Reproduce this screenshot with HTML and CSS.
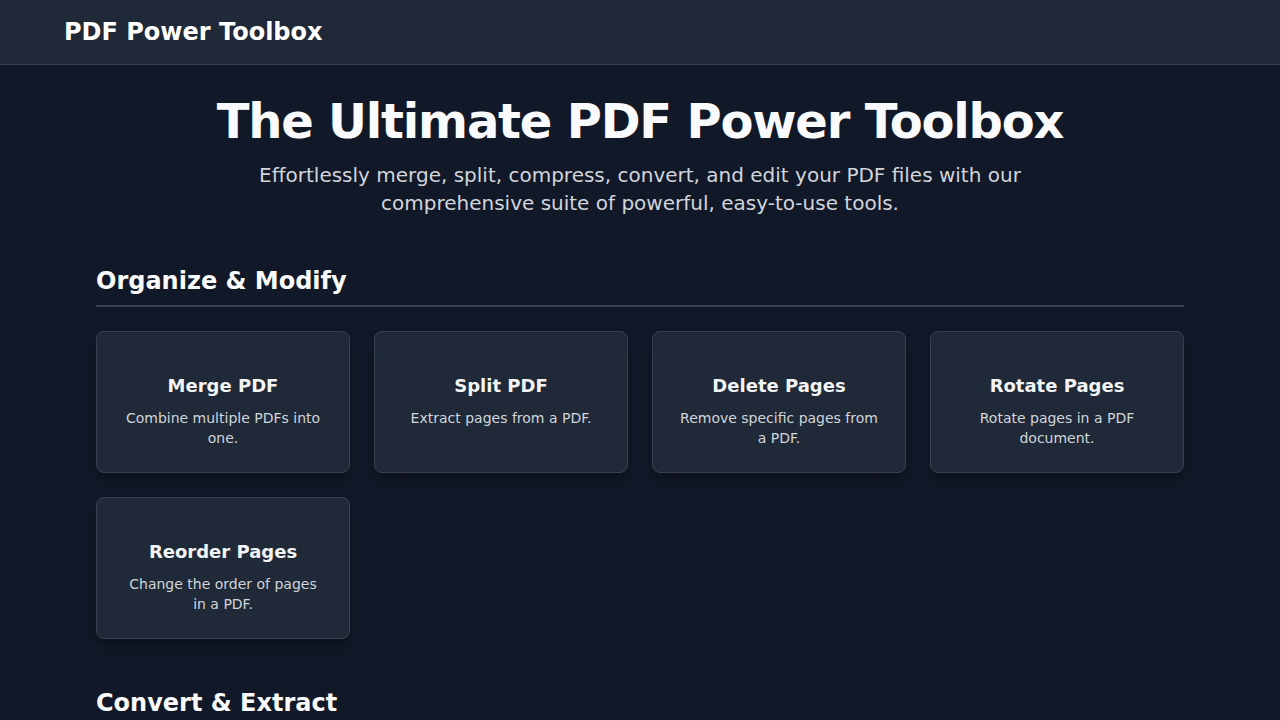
FILE: index.html
```html
<!DOCTYPE html>
<html lang="en">
<head>
<meta charset="utf-8">
<title>PDF Power Toolbox</title>
<link rel="stylesheet" href="styles.css">
</head>
<body>
<header class="site-header">
  <div class="header-inner">
    <span class="logo">PDF Power Toolbox</span>
  </div>
</header>
<main class="main">
  <section class="hero">
    <h1 class="hero-title">The Ultimate PDF Power Toolbox</h1>
    <p class="hero-sub">Effortlessly merge, split, compress, convert, and edit your PDF files with our comprehensive suite of powerful, easy-to-use tools.</p>
  </section>
  <section class="tool-section">
    <h2 class="section-title">Organize &amp; Modify</h2>
    <div class="tool-grid">
      <div class="card"><h3 class="card-title">Merge PDF</h3><p class="card-desc">Combine multiple PDFs into one.</p></div>
      <div class="card"><h3 class="card-title">Split PDF</h3><p class="card-desc">Extract pages from a PDF.</p></div>
      <div class="card"><h3 class="card-title">Delete Pages</h3><p class="card-desc">Remove specific pages from a PDF.</p></div>
      <div class="card"><h3 class="card-title">Rotate Pages</h3><p class="card-desc">Rotate pages in a PDF document.</p></div>
      <div class="card"><h3 class="card-title">Reorder Pages</h3><p class="card-desc">Change the order of pages in a PDF.</p></div>
    </div>
  </section>
  <section class="tool-section">
    <h2 class="section-title">Convert &amp; Extract</h2>
    <div class="tool-grid">
      <div class="card"><h3 class="card-title">PDF to Image</h3><p class="card-desc">Convert PDF pages to images.</p></div>
      <div class="card"><h3 class="card-title">Image to PDF</h3><p class="card-desc">Convert images into a PDF.</p></div>
    </div>
  </section>
</main>
</body>
</html>
```
FILE: styles.css
```css
* { box-sizing: border-box; }
html, body { margin: 0; padding: 0; }
body {
  background: #111827;
  color: #f9fafb;
  font-family: "DejaVu Sans", "Noto Sans", sans-serif;
}
.site-header {
  background: #1f2937;
  border-bottom: 1px solid #374151;
}
.header-inner {
  max-width: 1152px;
  margin: 0 auto;
  height: 64px;
  display: flex;
  align-items: center;
}
.logo {
  font-size: 24px;
  font-weight: bold;
  line-height: 32px;
  color: #ffffff;
}
.main {
  max-width: 1152px;
  margin: 0 auto;
  padding: 32px 32px;
}
.hero {
  text-align: center;
  margin-bottom: 48px;
}
.hero-title {
  margin: 0 0 16px;
  font-size: 48px;
  line-height: 48px;
  font-weight: bold;
  letter-spacing: -0.025em;
  color: #f9fafb;
}
.hero-sub {
  margin: 0 auto;
  max-width: 768px;
  font-size: 20px;
  line-height: 28px;
  color: #d1d5db;
}
.tool-section { margin-bottom: 48px; }
.section-title {
  margin: 0 0 24px;
  font-size: 24px;
  line-height: 32px;
  font-weight: bold;
  padding-bottom: 8px;
  border-bottom: 2px solid #374151;
  color: #f9fafb;
}
.tool-grid {
  display: grid;
  grid-template-columns: repeat(4, 1fr);
  gap: 24px;
}
.card {
  background: #1f2937;
  border: 1px solid #374151;
  border-radius: 8px;
  padding: 40px 24px 24px;
  text-align: center;
  box-shadow: 0 10px 15px -3px rgba(0,0,0,0.25), 0 4px 6px -4px rgba(0,0,0,0.2);
}
.card-title {
  margin: 0 0 8px;
  font-size: 18px;
  line-height: 28px;
  font-weight: bold;
  color: #f3f4f6;
}
.card-desc {
  margin: 0;
  font-size: 14px;
  line-height: 20px;
  color: #d1d5db;
}
```
